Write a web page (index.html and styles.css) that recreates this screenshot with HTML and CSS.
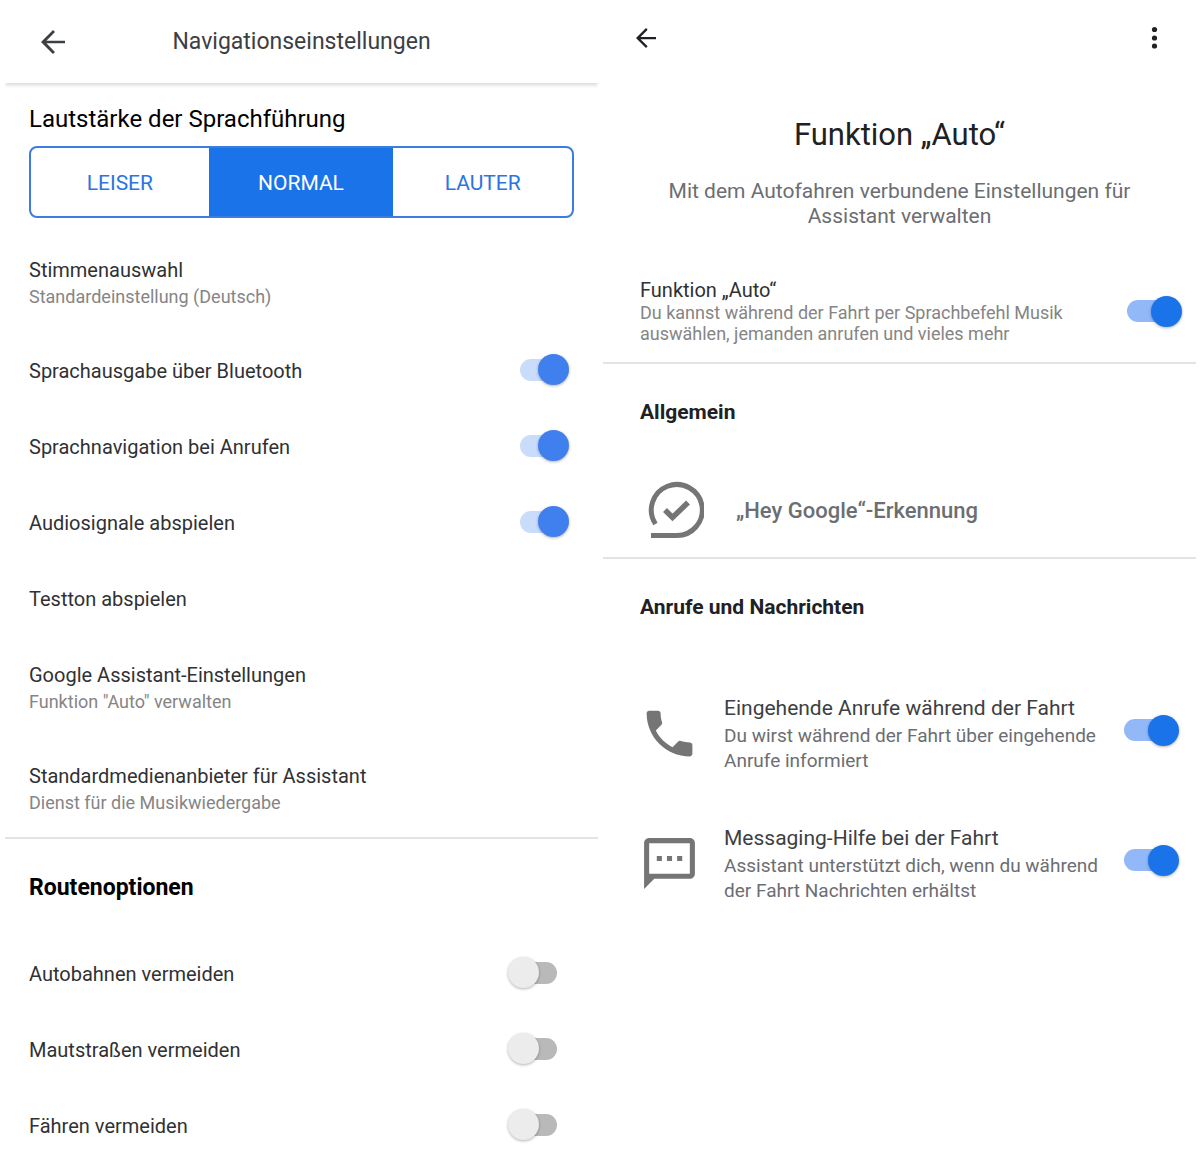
FILE: index.html
```html
<!DOCTYPE html>
<html lang="de">
<head>
    <meta charset="utf-8">
    <meta name="viewport" content="width=device-width, initial-scale=1">
    <title>Navigationseinstellungen</title>
    <link rel="stylesheet" href="styles.css">
</head>
<body>
    <main class="screen nav-settings">
        <header class="nav-bar">
            <button class="icon-btn" type="button" aria-label="Zurück">
                <svg width="36" height="36" viewBox="0 0 24 24" fill="#3c4043"><path d="M20 11.1H7.6l5.7-5.7L12 4l-8 8 8 8 1.3-1.4-5.7-5.7H20z"/></svg>
            </button>
            <h1>Navigationseinstellungen</h1>
        </header>

        <section class="volume">
            <h2 id="volume-label">Lautstärke der Sprachführung</h2>
            <div class="segments" role="group" aria-labelledby="volume-label">
                <button type="button">LEISER</button>
                <button type="button" class="active" aria-pressed="true">NORMAL</button>
                <button type="button">LAUTER</button>
            </div>
        </section>

        <section class="list">
            <a class="row" href="#stimme">
                <span class="label">Stimmenauswahl</span>
                <span class="sub">Standardeinstellung (Deutsch)</span>
            </a>
            <label class="row toggle-row">
                <span class="label">Sprachausgabe über Bluetooth</span>
                <input class="switch" type="checkbox" checked>
            </label>
            <label class="row toggle-row">
                <span class="label">Sprachnavigation bei Anrufen</span>
                <input class="switch" type="checkbox" checked>
            </label>
            <label class="row toggle-row">
                <span class="label">Audiosignale abspielen</span>
                <input class="switch" type="checkbox" checked>
            </label>
            <a class="row" href="#testton">
                <span class="label">Testton abspielen</span>
            </a>
            <a class="row" href="#assistant">
                <span class="label">Google Assistant-Einstellungen</span>
                <span class="sub">Funktion "Auto" verwalten</span>
            </a>
            <a class="row" href="#medien">
                <span class="label">Standardmedienanbieter für Assistant</span>
                <span class="sub">Dienst für die Musikwiedergabe</span>
            </a>
        </section>

        <section class="list routes">
            <h2>Routenoptionen</h2>
            <label class="row toggle-row">
                <span class="label">Autobahnen vermeiden</span>
                <input class="switch" type="checkbox">
            </label>
            <label class="row toggle-row">
                <span class="label">Mautstraßen vermeiden</span>
                <input class="switch" type="checkbox">
            </label>
            <label class="row toggle-row">
                <span class="label">Fähren vermeiden</span>
                <input class="switch" type="checkbox">
            </label>
        </section>
    </main>

    <main class="screen assistant">
        <header class="top-bar">
            <button class="icon-btn" type="button" aria-label="Zurück">
                <svg width="30" height="30" viewBox="0 0 24 24" fill="#202124"><path d="M20 11.1H7.6l5.7-5.7L12 4l-8 8 8 8 1.3-1.4-5.7-5.7H20z"/></svg>
            </button>
            <button class="icon-btn" type="button" aria-label="Mehr">
                <svg width="30" height="30" viewBox="0 0 30 30" fill="#202124"><circle cx="15.500" cy="6.500" r="2.600"/><circle cx="15.500" cy="15" r="2.600"/><circle cx="15.500" cy="23" r="2.600"/></svg>
            </button>
        </header>

        <section class="intro">
            <h1>Funktion „Auto“</h1>
            <p>Mit dem Autofahren verbundene Einstellungen für Assistant verwalten</p>
        </section>

        <label class="feature">
            <span class="text">
                <span class="label">Funktion „Auto“</span>
                <span class="sub">Du kannst während der Fahrt per Sprachbefehl Musik auswählen, jemanden anrufen und vieles mehr</span>
            </span>
            <input class="switch wide" type="checkbox" checked>
        </label>

        <section class="general">
            <h2>Allgemein</h2>
            <a class="hey" href="#erkennung">
                <svg width="58" height="58" viewBox="0 0 58 58" fill="none" stroke="#757575" stroke-width="5"><path d="M9.500 43A25.500 25.500 0 1 1 30 54.500H5"/><path d="M19 29l7.500 7.500L42 21.500" stroke-width="5.500"/></svg>
                <span>„Hey Google“-Erkennung</span>
            </a>
        </section>

        <section class="calls">
            <h2>Anrufe und Nachrichten</h2>
            <label class="option">
                <svg width="61" height="61" viewBox="0 0 24 24" fill="#757575"><path d="M6.620 10.790c1.440 2.830 3.760 5.140 6.590 6.590l2.200-2.200c.27-.27.67-.36 1.020-.24 1.120.37 2.330.57 3.570.57.55 0 1 .45 1 1V20c0 .55-.45 1-1 1-9.390 0-17-7.610-17-17 0-.55.45-1 1-1h3.500c.55 0 1 .45 1 1 0 1.250.2 2.450.57 3.570.11.35.03.74-.25 1.020l-2.200 2.200z"/></svg>
                <span class="text">
                    <span class="label">Eingehende Anrufe während der Fahrt</span>
                    <span class="sub">Du wirst während der Fahrt über eingehende Anrufe informiert</span>
                </span>
                <input class="switch wide" type="checkbox" checked>
            </label>
            <label class="option">
                <svg width="61" height="61" viewBox="0 0 24 24" fill="#757575"><path d="M20 2H4c-1.100 0-2 .9-2 2v18l4-4h14c1.100 0 2-.9 2-2V4c0-1.100-.9-2-2-2zm0 14H4V4h16v12zM7 9h2v2H7zm4 0h2v2h-2zm4 0h2v2h-2z"/></svg>
                <span class="text">
                    <span class="label">Messaging-Hilfe bei der Fahrt</span>
                    <span class="sub">Assistant unterstützt dich, wenn du während der Fahrt Nachrichten erhältst</span>
                </span>
                <input class="switch wide" type="checkbox" checked>
            </label>
        </section>
    </main>
</body>
</html>
```
FILE: styles.css
```css
* {
    box-sizing: border-box;
}
body {
    margin: 0;
    padding: 0 4px 0 5px;
    display: flex;
    gap: 5px;
    background: #fff;
    color: #303134;
    font-family: Roboto, sans-serif;
    font-size: 20px;
}
h1, h2, p {
    margin: 0;
    font-weight: 400;
}
a {
    color: inherit;
    text-decoration: none;
}
.screen {
    flex: 1;
    min-width: 0;
}
.icon-btn {
    padding: 0;
    border: 0;
    background: none;
    line-height: 0;
}
.label, .sub {
    display: block;
}

/* switches */
.switch {
    appearance: none;
    flex: none;
    width: 49px;
    height: 31px;
    margin: 0;
    display: flex;
    align-items: center;
    position: relative;
}
.switch::before {
    content: "";
    position: absolute;
    left: 8px;
    right: 0;
    height: 22px;
    border-radius: 11px;
    background: #b9b9b9;
}
.switch::after {
    content: "";
    position: relative;
    width: 31px;
    height: 31px;
    border-radius: 50%;
    background: #ececec;
    box-shadow: 0 1px 3px rgba(0, 0, 0, .3);
}
.switch:checked {
    justify-content: flex-end;
}
.switch:checked::before {
    left: 0;
    right: 8px;
    background: #c9ddfb;
}
.switch:checked::after {
    background: #4080ee;
}
.switch.wide {
    width: 55px;
}
.switch.wide:checked::before {
    background: #93b8f8;
}
.switch.wide:checked::after {
    background: #1a73e8;
}

/* left screen */
.nav-bar {
    display: grid;
    grid-template-columns: 36px 1fr 36px;
    align-items: center;
    height: 83px;
    padding: 0 30px;
    box-shadow: 0 2px 4px rgba(0, 0, 0, .16);
    clip-path: inset(0 0 -6px 0);
}
.nav-bar h1 {
    text-align: center;
    font-size: 23px;
    color: #3c4043;
}
.volume {
    padding: 20px 24px 12px;
}
.volume h2 {
    font-size: 24px;
    line-height: 32px;
    color: #000;
}
.segments {
    display: grid;
    grid-template-columns: 178fr 185fr 179fr;
    height: 72px;
    margin-top: 11px;
    border: 2px solid #3b7de0;
    border-radius: 8px;
    overflow: hidden;
}
.segments button {
    padding: 2px 0 0;
    border: 0;
    background: none;
    color: #2b74e2;
    font: inherit;
    font-size: 21px;
}
.segments .active {
    background: #1a73e8;
    color: #fff;
}
.list {
    border-bottom: 2px solid #e4e4e4;
}
.row {
    display: block;
    padding: 27px 29px 22px 24px;
}
.toggle-row {
    display: flex;
    align-items: center;
    justify-content: space-between;
    height: 76px;
}
.toggle-row .switch {
    margin-bottom: 4px;
}
.row .label {
    line-height: 27px;
}
.row .sub {
    font-size: 18px;
    line-height: 25px;
    color: #858585;
}
.routes {
    border: 0;
}
.routes h2 {
    padding: 33px 24px 31px;
    font-size: 23px;
    font-weight: 700;
    line-height: 31px;
    color: #000;
}
.routes .row {
    padding-right: 41px;
}

/* right screen */
.top-bar {
    display: flex;
    justify-content: space-between;
    padding: 23px 27px 0 28px;
}
.intro {
    padding: 62px 60px 49px;
    text-align: center;
}
.intro h1 {
    font-size: 31px;
    line-height: 40px;
    color: #202124;
}
.intro p {
    margin-top: 24px;
    font-size: 21px;
    line-height: 25px;
    color: #6b6e72;
}
.feature {
    display: flex;
    align-items: center;
    justify-content: space-between;
    padding: 0 14px 18px 37px;
    border-bottom: 2px solid #e4e4e4;
}
.feature .label {
    line-height: 24px;
}
.feature .text {
    width: 430px;
}
.feature .sub {
    font-size: 18px;
    line-height: 21px;
    color: #858585;
}
.general {
    border-bottom: 2px solid #e4e4e4;
}
.general h2, .calls h2 {
    padding: 35px 37px;
    font-size: 21px;
    font-weight: 700;
    line-height: 26px;
    color: #202124;
}
.hey {
    display: flex;
    align-items: center;
    gap: 32px;
    padding: 21px 43px 18px;
    font-size: 22px;
    font-weight: 500;
    color: #6b6e72;
}
.option {
    display: flex;
    align-items: center;
    padding: 38px 17px 12px 36px;
}
.option .text {
    flex: 1;
    padding: 0 12px 0 24px;
}
.option .label {
    font-size: 21px;
    line-height: 30px;
    color: #3c4043;
}
.option .sub {
    font-size: 19px;
    line-height: 25px;
    color: #6b6e72;
}
.option .switch {
    margin-bottom: 6px;
}
```
